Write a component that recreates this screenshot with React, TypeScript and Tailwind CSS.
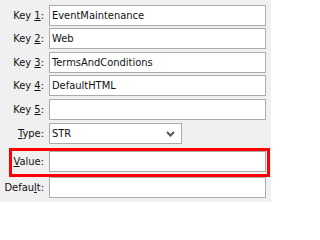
import React from "react"

interface FieldProps {
  label: React.ReactNode
  value?: string
}

function Field({ value = "" }: { value?: string }) {
  return (
    <div className="h-[21px] flex-1 border border-[#ababab] bg-white pl-[2px] flex items-center text-[11px] text-[#111] leading-none">
      {value}
    </div>
  )
}

function Row({ label, value }: FieldProps) {
  return (
    <div className="flex items-center pr-[5px]">
      <div className="w-[44px] text-right text-[11px] leading-none text-[#111]">{label}</div>
      <div className="w-[5px]" />
      <Field value={value} />
    </div>
  )
}

export default function App() {
  return (
    <div className="w-[271px] h-[202px] bg-[#f0f0f0] font-['DejaVu_Sans_Condensed',Tahoma,sans-serif] overflow-hidden pt-[5px]">
      <Row label={<>Key <u>1</u>:</>} value="EventMaintenance" />
      <div className="mt-[2px]">
        <Row label={<>Key <u>2</u>:</>} value="Web" />
      </div>
      <div className="mt-[3px]">
        <Row label={<>Key <u>3</u>:</>} value="TermsAndConditions" />
      </div>
      <div className="mt-[2px]">
        <Row label={<>Key <u>4</u>:</>} value="DefaultHTML" />
      </div>
      <div className="mt-[3px]">
        <Row label={<>Key <u>5</u>:</>} />
      </div>

      <div className="mt-[3px] flex items-center">
        <div className="w-[44px] text-right text-[11px] leading-none text-[#111]">
          <u>T</u>ype:
        </div>
        <div className="w-[5px]" />
        <div className="h-[21px] w-[133px] border border-[#ababab] bg-white pl-[2px] pr-[6px] flex items-center justify-between text-[11px] leading-none text-[#111]">
          <span>STR</span>
          <svg width="9" height="6" viewBox="0 0 9 6">
            <polyline points="1,1 4.5,4.5 8,1" fill="none" stroke="#555" strokeWidth="2" />
          </svg>
        </div>
      </div>

      <div className="mt-[4px] ml-[9px] mr-[1px] border-[3px] border-[#ff0000] pb-[2px] pr-[1px] flex items-center">
        <div className="w-[32px] text-right text-[11px] leading-none text-[#111]">
          <u>V</u>alue:
        </div>
        <div className="w-[5px]" />
        <Field />
      </div>

      <Row label={<>Defau<u>l</u>t:</>} />
    </div>
  )
}
